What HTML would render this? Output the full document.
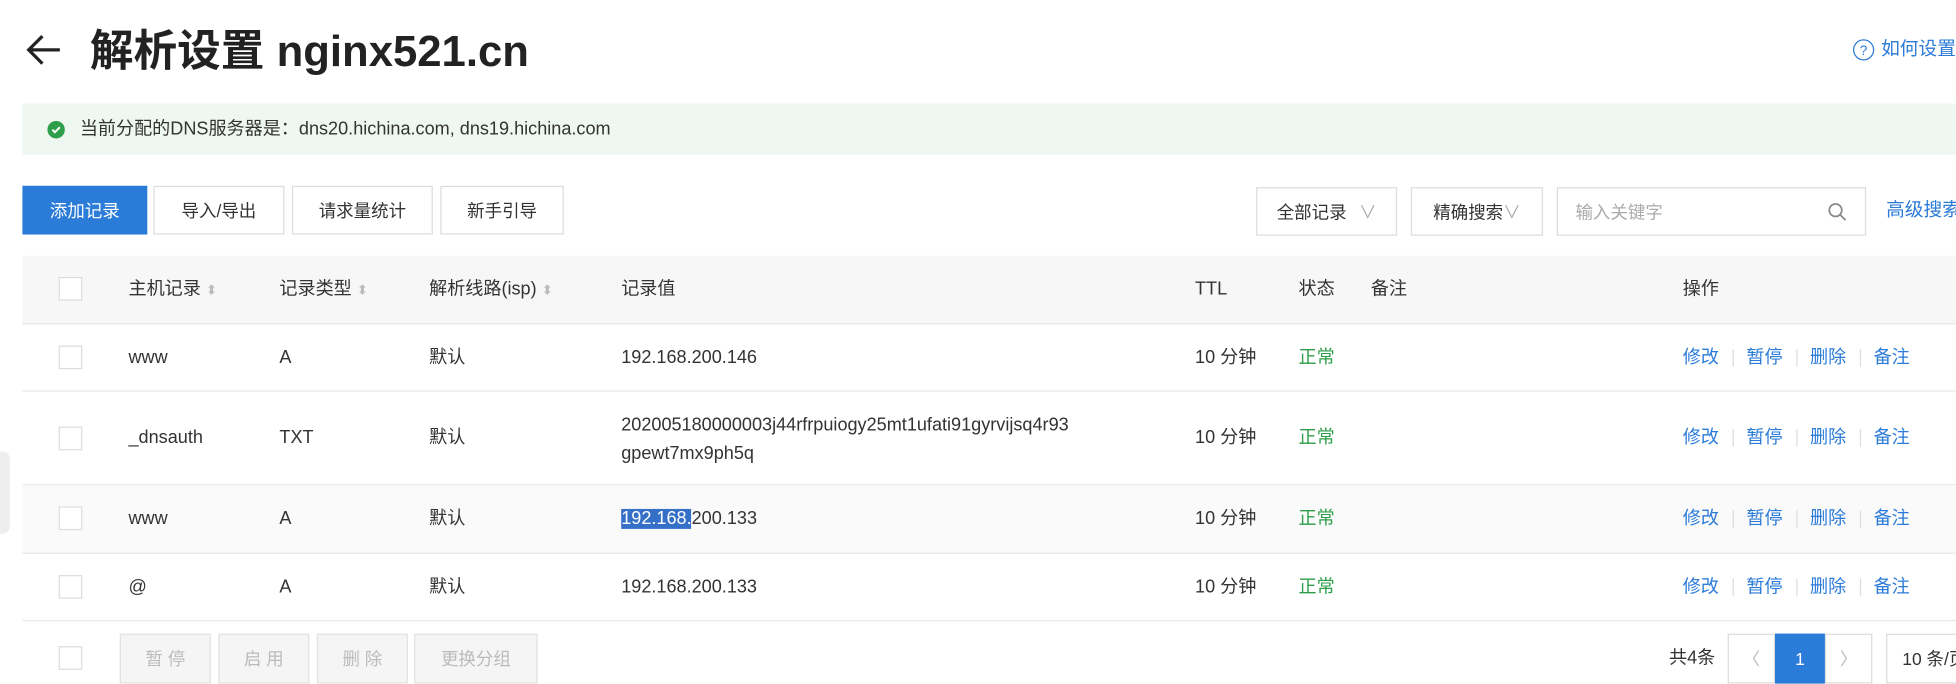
<!DOCTYPE html>
<html><head><meta charset="utf-8"><style>
*{margin:0;padding:0;box-sizing:border-box}
html,body{width:1956px;height:684px;overflow:hidden;background:#fff}
#w{position:absolute;left:0;top:0;width:1568px;height:548px;transform:scale(1.2474);transform-origin:0 0;font-family:"Liberation Sans","Noto Sans CJK SC",sans-serif;font-size:14.5px;color:#333}
.a{position:absolute;white-space:nowrap;line-height:18px}
.btn{position:absolute;border:1px solid #ddd;background:#fff;display:flex;align-items:center;justify-content:center;font-size:14px;color:#333}
.cb{position:absolute;width:19px;height:19px;border:1px solid #ddd;background:#fff}
.row{position:absolute;left:18px;width:1550px;border-bottom:1px solid #e8e8e8}
.blue{color:#2b7bd8}
.sep{position:absolute;width:1px;height:14px;background:#ddd}
.dis{background:#f5f5f5;color:#bbb;border-color:#e2e2e2}
</style></head><body><div id="w">
<svg class="a" style="left:20px;top:27px" width="30" height="26" viewBox="0 0 30 26"><path d="M28 13H3M14 2L3 13l11 11" fill="none" stroke="#222" stroke-width="2.6"/></svg>
<div class="a" style="left:72px;top:22px;font-size:35px;line-height:40px;font-weight:bold;color:#222">解析设置 nginx521.cn</div>
<svg class="a" style="left:1485px;top:31px" width="18" height="18"><circle cx="9" cy="9" r="8" fill="none" stroke="#2b7bd8"/><text x="9" y="13" font-size="11" text-anchor="middle" fill="#2b7bd8">?</text></svg>
<div class="a blue" style="left:1508px;top:31px;font-size:15px">如何设置</div>
<div class="a" style="left:18px;top:83px;width:1550px;height:41px;background:#eff8f0"></div>
<svg class="a" style="left:38px;top:97px" width="14" height="14"><circle cx="7" cy="7" r="7" fill="#2f9e4a"/><path d="M4 7l2 2 4-4" fill="none" stroke="#fff" stroke-width="1.6"/></svg>
<div class="a" style="left:64px;top:95px">当前分配的DNS服务器是：dns20.hichina.com, dns19.hichina.com</div>
<div class="btn" style="left:18px;top:149px;width:100px;height:39px;background:#2b7bd8;border-color:#2b7bd8;color:#fff">添加记录</div>
<div class="btn" style="left:123px;top:149px;width:105px;height:39px">导入/导出</div>
<div class="btn" style="left:234px;top:149px;width:113px;height:39px">请求量统计</div>
<div class="btn" style="left:353px;top:149px;width:99px;height:39px">新手引导</div>
<div class="btn" style="left:1007px;top:150px;width:113px;height:39px">全部记录 <span style="color:#aaa;margin-left:10px">∨</span></div>
<div class="btn" style="left:1131px;top:150px;width:106px;height:39px">精确搜索<span style="color:#aaa">∨</span></div>
<div class="btn" style="left:1248px;top:150px;width:248px;height:39px;justify-content:flex-start;padding-left:14px;color:#aaa">输入关键字
<svg style="position:absolute;right:14px;top:11px" width="16" height="16"><circle cx="6.5" cy="6.5" r="5" fill="none" stroke="#888" stroke-width="1.4"/><path d="M10 10l4.5 4.5" stroke="#888" stroke-width="1.4"/></svg></div>
<div class="a blue" style="left:1512px;top:160px;font-size:15px">高级搜索</div>
<div class="row" style="top:205px;height:55px;background:#f7f7f7"></div>
<div class="cb" style="left:47px;top:222px"></div>
<div class="a" style="left:103px;top:223px">主机记录 <span style="color:#bbb;font-size:11px">⬍</span></div>
<div class="a" style="left:224px;top:223px">记录类型 <span style="color:#bbb;font-size:11px">⬍</span></div>
<div class="a" style="left:344px;top:223px">解析线路(isp) <span style="color:#bbb;font-size:11px">⬍</span></div>
<div class="a" style="left:498px;top:223px">记录值</div>
<div class="a" style="left:958px;top:223px">TTL</div>
<div class="a" style="left:1041px;top:223px">状态</div>
<div class="a" style="left:1099px;top:223px">备注</div>
<div class="a" style="left:1349px;top:223px">操作</div>

<div class="row" style="top:260px;height:54px"></div>
<div class="row" style="top:314px;height:75px"></div>
<div class="row" style="top:389px;height:55px;background:#fafafa"></div>
<div class="row" style="top:444px;height:54px"></div>

<div class="cb" style="left:47px;top:277px"></div>
<div class="a" style="left:103px;top:278px">www</div><div class="a" style="left:224px;top:278px">A</div><div class="a" style="left:344px;top:278px">默认</div><div class="a" style="left:498px;top:278px">192.168.200.146</div>

<div class="cb" style="left:47px;top:342px"></div>
<div class="a" style="left:103px;top:342px">_dnsauth</div><div class="a" style="left:224px;top:342px">TXT</div><div class="a" style="left:344px;top:342px">默认</div><div class="a" style="left:498px;top:330px;line-height:23px">202005180000003j44rfrpuiogy25mt1ufati91gyrvijsq4r93<br>gpewt7mx9ph5q</div>

<div class="cb" style="left:47px;top:406px"></div>
<div class="a" style="left:103px;top:407px">www</div><div class="a" style="left:224px;top:407px">A</div><div class="a" style="left:344px;top:407px">默认</div><div class="a" style="left:498px;top:407px"><span style="background:#3470c8;color:#fff">192.168.</span>200.133</div>

<div class="cb" style="left:47px;top:461px"></div>
<div class="a" style="left:103px;top:462px">@</div><div class="a" style="left:224px;top:462px">A</div><div class="a" style="left:344px;top:462px">默认</div><div class="a" style="left:498px;top:462px">192.168.200.133</div>

<div class="a" style="left:958px;top:278px">10 分钟</div><div class="a" style="left:1041px;top:278px;color:#2f9e4a">正常</div>
<div class="a" style="left:958px;top:342px">10 分钟</div><div class="a" style="left:1041px;top:342px;color:#2f9e4a">正常</div>
<div class="a" style="left:958px;top:407px">10 分钟</div><div class="a" style="left:1041px;top:407px;color:#2f9e4a">正常</div>
<div class="a" style="left:958px;top:462px">10 分钟</div><div class="a" style="left:1041px;top:462px;color:#2f9e4a">正常</div>

<div class="a blue" style="left:1349px;top:278px">修改</div><div class="sep" style="left:1389px;top:280px"></div><div class="a blue" style="left:1400px;top:278px">暂停</div><div class="sep" style="left:1440px;top:280px"></div><div class="a blue" style="left:1451px;top:278px">删除</div><div class="sep" style="left:1491px;top:280px"></div><div class="a blue" style="left:1502px;top:278px">备注</div>
<div class="a blue" style="left:1349px;top:342px">修改</div><div class="sep" style="left:1389px;top:344px"></div><div class="a blue" style="left:1400px;top:342px">暂停</div><div class="sep" style="left:1440px;top:344px"></div><div class="a blue" style="left:1451px;top:342px">删除</div><div class="sep" style="left:1491px;top:344px"></div><div class="a blue" style="left:1502px;top:342px">备注</div>
<div class="a blue" style="left:1349px;top:407px">修改</div><div class="sep" style="left:1389px;top:409px"></div><div class="a blue" style="left:1400px;top:407px">暂停</div><div class="sep" style="left:1440px;top:409px"></div><div class="a blue" style="left:1451px;top:407px">删除</div><div class="sep" style="left:1491px;top:409px"></div><div class="a blue" style="left:1502px;top:407px">备注</div>
<div class="a blue" style="left:1349px;top:462px">修改</div><div class="sep" style="left:1389px;top:464px"></div><div class="a blue" style="left:1400px;top:462px">暂停</div><div class="sep" style="left:1440px;top:464px"></div><div class="a blue" style="left:1451px;top:462px">删除</div><div class="sep" style="left:1491px;top:464px"></div><div class="a blue" style="left:1502px;top:462px">备注</div>

<div class="cb" style="left:47px;top:518px"></div>
<div class="btn dis" style="left:96px;top:508px;width:73px;height:40px">暂 停</div>
<div class="btn dis" style="left:175px;top:508px;width:73px;height:40px">启 用</div>
<div class="btn dis" style="left:254px;top:508px;width:73px;height:40px">删 除</div>
<div class="btn dis" style="left:332px;top:508px;width:99px;height:40px">更换分组</div>
<div class="a" style="left:1338px;top:519px">共4条</div>
<div class="btn" style="left:1385px;top:508px;width:38px;height:40px;color:#bbb">〈</div>
<div class="btn" style="left:1423px;top:508px;width:40px;height:40px;background:#2b7bd8;border-color:#2b7bd8;color:#fff">1</div>
<div class="btn" style="left:1463px;top:508px;width:38px;height:40px;color:#bbb">〉</div>
<div class="btn" style="left:1512px;top:508px;width:70px;height:40px;justify-content:flex-start;padding-left:12px">10 条/页</div>
<div class="a" style="left:0;top:362px;width:8px;height:66px;background:#eee;border-radius:0 6px 6px 0"></div>
</div></body></html>
